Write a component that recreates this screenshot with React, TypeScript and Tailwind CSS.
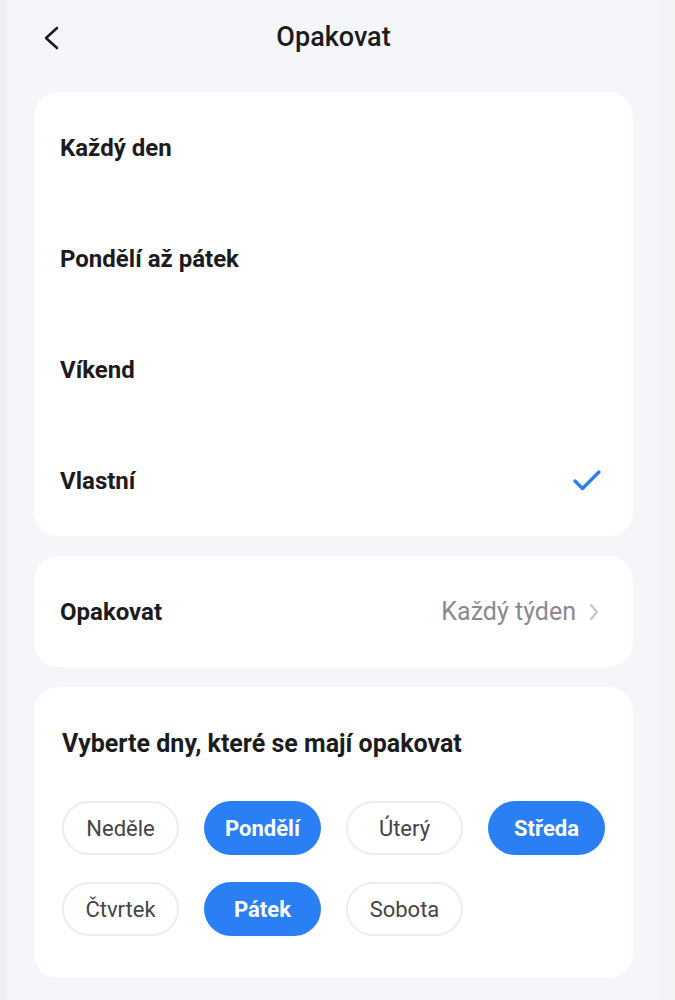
import { Check } from "lucide-react";

const options = ["Každý den", "Pondělí až pátek", "Víkend", "Vlastní"];
const days = [
  { name: "Neděle", on: false },
  { name: "Pondělí", on: true },
  { name: "Úterý", on: false },
  { name: "Středa", on: true },
  { name: "Čtvrtek", on: false },
  { name: "Pátek", on: true },
  { name: "Sobota", on: false },
];

export default function App() {
  const selected = "Vlastní";

  return (
    <div
      className="flex h-[1000px] w-[675px] overflow-hidden bg-[#f2f2f4]"
      style={{ fontFamily: "Roboto, 'Noto Sans', sans-serif" }}
    >
      <div className="w-[7px] shrink-0 bg-[#f0f0f2]" />
      <div className="w-[653px] shrink-0 bg-[#f5f6fa] px-[27px]">
        <header className="relative flex h-[74px] items-center justify-center">
          <svg
            className="absolute left-[8px] top-[25px]"
            width="20"
            height="26"
            viewBox="0 0 20 26"
            fill="none"
            stroke="#1c1c1e"
            strokeWidth="2.6"
            strokeLinecap="round"
            strokeLinejoin="round"
          >
            <polyline points="15,3 4,13 15,23" />
          </svg>
          <h1 className="text-[27px] font-medium text-[#1c1c1e]">Opakovat</h1>
        </header>

        <div className="mt-[18px] flex flex-col gap-[20px]">
          <section className="rounded-[24px] bg-white">
            {options.map((o) => (
              <div
                key={o}
                className="flex h-[111px] items-center justify-between pl-[26px] pr-[28px]"
              >
                <span className="text-[24px] font-bold text-[#1c1c1e]">{o}</span>
                {o === selected && (
                  <Check size={36} strokeWidth={2.2} className="text-[#2a7ff5]" />
                )}
              </div>
            ))}
          </section>

          <section className="flex h-[111px] items-center justify-between rounded-[24px] bg-white pl-[26px] pr-[34px]">
            <span className="text-[24px] font-bold text-[#1c1c1e]">Opakovat</span>
            <span className="flex items-center gap-[13px] text-[25px] text-[#8a8a8e]">
              Každý týden
              <svg
                width="10"
                height="18"
                viewBox="0 0 10 18"
                fill="none"
                stroke="#c4c4c7"
                strokeWidth="2"
                strokeLinecap="round"
                strokeLinejoin="round"
              >
                <polyline points="2,2 8,9 2,16" />
              </svg>
            </span>
          </section>

          <section className="rounded-[24px] bg-white px-[28px] pb-[42px] pt-[42px]">
            <h2 className="text-[25px] font-bold leading-[30px] text-[#1c1c1e]">
              Vyberte dny, které se mají opakovat
            </h2>
            <div className="mt-[42px] grid grid-cols-[repeat(4,117px)] gap-x-[25px] gap-y-[27px]">
              {days.map((d) => (
                <div
                  key={d.name}
                  className={
                    d.on
                      ? "flex h-[54px] items-center justify-center rounded-full bg-[#2a7ff5] text-[22px] font-bold text-white"
                      : "flex h-[54px] items-center justify-center rounded-full border-2 border-[#ececee] text-[22px] text-[#444446]"
                  }
                >
                  {d.name}
                </div>
              ))}
            </div>
          </section>
        </div>
      </div>
      <div className="flex-1 bg-[#f2f3f5]" />
    </div>
  );
}
